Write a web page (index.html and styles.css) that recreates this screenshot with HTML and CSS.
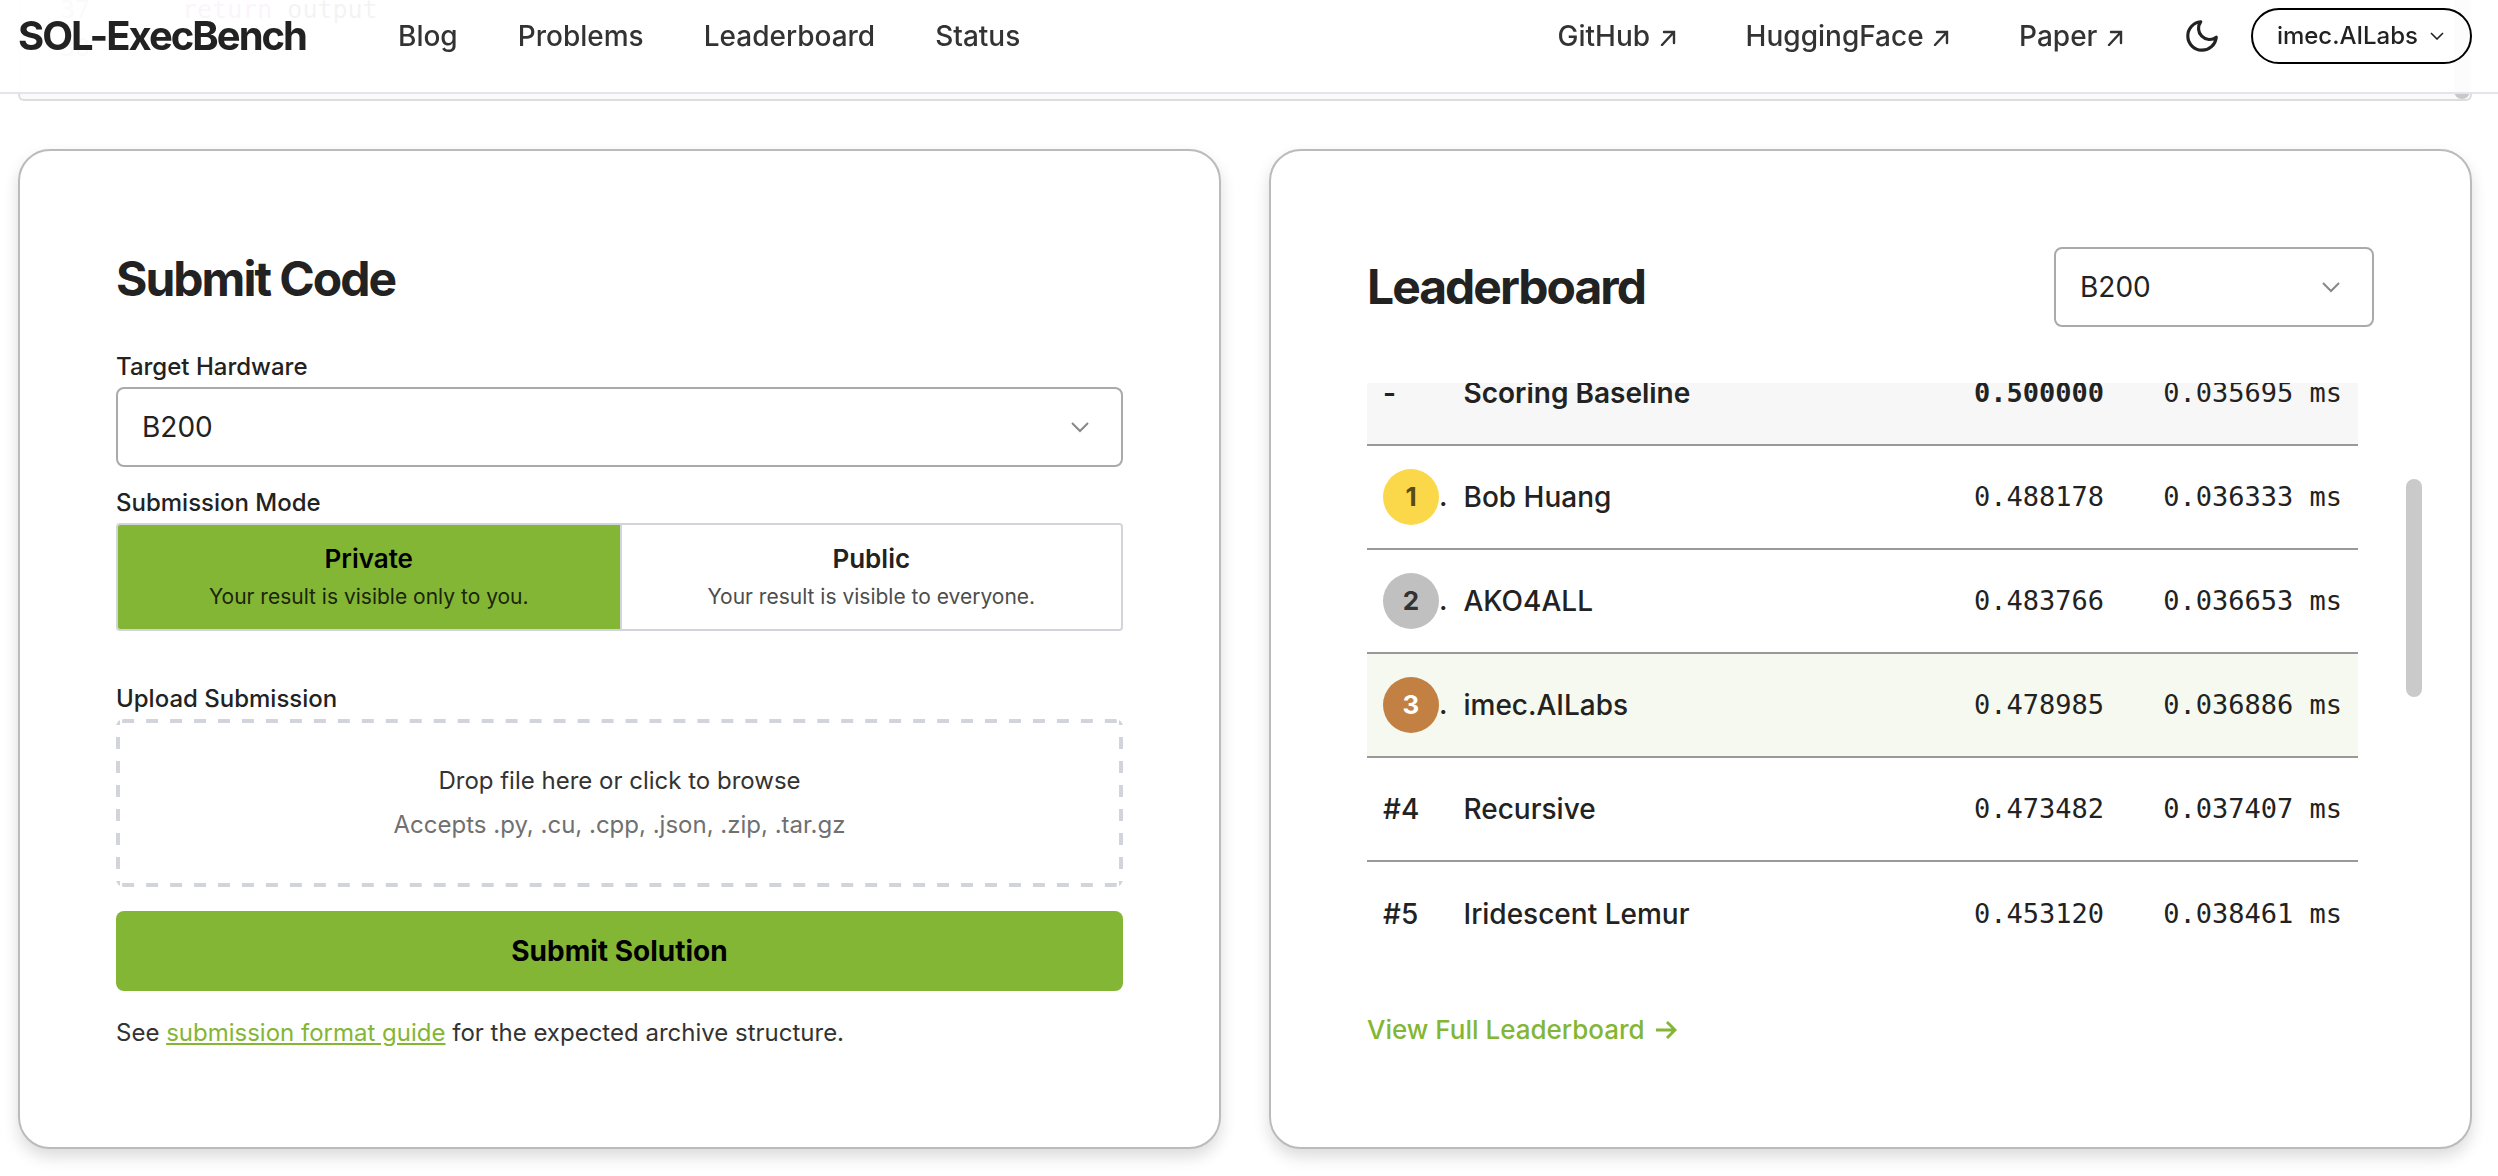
FILE: index.html
```html
<!DOCTYPE html>
<html lang="en">
<head>
    <meta charset="UTF-8">
    <meta name="viewport" content="width=device-width, initial-scale=1.0">
    <title>SOL-ExecBench</title>
    <link rel="stylesheet" href="styles.css">
</head>
<body>
    <header class="header">
        <a href="#" class="logo">SOL-ExecBench</a>
        <nav class="nav">
            <a href="#">Blog</a>
            <a href="#">Problems</a>
            <a href="#">Leaderboard</a>
            <a href="#">Status</a>
        </nav>
        <nav class="nav nav-external">
            <a href="#">GitHub <svg class="icon-out" viewBox="0 0 16 16"><path d="M2 15L14 2M4 2h10v11"/></svg></a>
            <a href="#">HuggingFace <svg class="icon-out" viewBox="0 0 16 16"><path d="M2 15L14 2M4 2h10v11"/></svg></a>
            <a href="#">Paper <svg class="icon-out" viewBox="0 0 16 16"><path d="M2 15L14 2M4 2h10v11"/></svg></a>
        </nav>
        <button type="button" class="theme-button" aria-label="Toggle theme">
            <svg viewBox="0 0 24 24"><path d="M21 12.8A9 9 0 1 1 11.2 3a7 7 0 0 0 9.8 9.8z"/></svg>
        </button>
        <button type="button" class="user-button">
            imec.AILabs
            <svg viewBox="0 0 14 8"><path d="M1 1l6 6 6-6"/></svg>
        </button>
    </header>

    <main class="page">
        <!-- End of the reference code block, scrolled under the header -->
        <div class="code-block">
            <div class="code-lines">
                <div class="code-line"><span class="line-number">37</span><span><span class="keyword">return</span> output</span></div>
                <div class="code-line"><span class="line-number">38</span></div>
            </div>
            <div class="code-scroll"></div>
        </div>

        <div class="cards">
            <section class="card">
                <h2>Submit Code</h2>
                <form class="submit-form">
                    <label for="hardware">Target Hardware</label>
                    <select id="hardware" class="select">
                        <option>B200</option>
                    </select>

                    <fieldset class="mode">
                        <legend>Submission Mode</legend>
                        <div class="mode-options">
                            <label class="mode-option">
                                <input type="radio" name="mode" value="private" checked>
                                <strong>Private</strong>
                                <span>Your result is visible only to you.</span>
                            </label>
                            <label class="mode-option">
                                <input type="radio" name="mode" value="public">
                                <strong>Public</strong>
                                <span>Your result is visible to everyone.</span>
                            </label>
                        </div>
                    </fieldset>

                    <label for="file">Upload Submission</label>
                    <label class="dropzone">
                        <input type="file" id="file">
                        <span class="drop-title">Drop file here or click to browse</span>
                        <span class="drop-hint">Accepts .py, .cu, .cpp, .json, .zip, .tar.gz</span>
                    </label>

                    <button type="submit" class="submit-button">Submit Solution</button>
                </form>
                <p class="note">See <a href="#">submission format guide</a> for the expected archive structure.</p>
            </section>

            <section class="card">
                <div class="board-header">
                    <h2>Leaderboard</h2>
                    <select class="select board-select" aria-label="Hardware">
                        <option>B200</option>
                    </select>
                </div>
                <div class="board-body">
                    <div class="board-clip">
                        <table class="board">
                            <tbody>
                                <tr class="baseline">
                                    <td>-</td>
                                    <td>Scoring Baseline</td>
                                    <td class="num">0.500000</td>
                                    <td class="num time">0.035695 ms</td>
                                </tr>
                                <tr>
                                    <td><span class="medal gold">1</span>.</td>
                                    <td>Bob Huang</td>
                                    <td class="num">0.488178</td>
                                    <td class="num time">0.036333 ms</td>
                                </tr>
                                <tr>
                                    <td><span class="medal silver">2</span>.</td>
                                    <td>AKO4ALL</td>
                                    <td class="num">0.483766</td>
                                    <td class="num time">0.036653 ms</td>
                                </tr>
                                <tr class="mine">
                                    <td><span class="medal bronze">3</span>.</td>
                                    <td>imec.AILabs</td>
                                    <td class="num">0.478985</td>
                                    <td class="num time">0.036886 ms</td>
                                </tr>
                                <tr>
                                    <td>#4</td>
                                    <td>Recursive</td>
                                    <td class="num">0.473482</td>
                                    <td class="num time">0.037407 ms</td>
                                </tr>
                                <tr>
                                    <td>#5</td>
                                    <td>Iridescent Lemur</td>
                                    <td class="num">0.453120</td>
                                    <td class="num time">0.038461 ms</td>
                                </tr>
                            </tbody>
                        </table>
                    </div>
                    <div class="scroll-thumb"></div>
                </div>
                <a href="#" class="board-link">View Full Leaderboard
                    <svg viewBox="0 0 22 20"><path d="M1 10h19M12 2l8 8-8 8"/></svg>
                </a>
            </section>
        </div>
    </main>
</body>
</html>
```
FILE: styles.css
```css
* {
    box-sizing: border-box;
}
body {
    margin: 0;
    background-color: #fff;
    color: #222;
    font-family: Inter, "Liberation Sans", sans-serif;
    font-size: 28px;
    line-height: 40px;
}
svg {
    fill: none;
    stroke: currentColor;
}
button, select, input {
    font: inherit;
    color: inherit;
}
a {
    color: inherit;
    text-decoration: none;
}

/* Header */
.header {
    position: fixed;
    top: 0;
    left: 0;
    right: 0;
    z-index: 10;
    display: flex;
    align-items: center;
    height: 94px;
    padding: 0 26px 20px 18px;
    background-color: rgba(255, 255, 255, 0.95);
    border-bottom: 2px solid #e2e6ea;
}
.logo {
    margin-right: 92px;
    font-size: 40px;
    font-weight: 700;
    letter-spacing: -2px;
}
.nav {
    display: flex;
    gap: 60px;
    font-weight: 500;
    color: #333;
}
.nav-external {
    gap: 70px;
    margin-left: auto;
}
.icon-out {
    width: 16px;
    height: 16px;
    margin-left: 2px;
    stroke-width: 2.4;
    stroke-linecap: round;
}
.theme-button {
    display: flex;
    margin: 0 30px 0 60px;
    padding: 0;
    border: none;
    background: none;
    cursor: pointer;
}
.theme-button svg {
    width: 38px;
    height: 38px;
    stroke-width: 2;
    stroke-linejoin: round;
}
.user-button {
    display: flex;
    align-items: center;
    gap: 12px;
    height: 56px;
    padding: 0 26px 0 24px;
    border: 2px solid #000;
    border-radius: 28px;
    background-color: transparent;
    font-size: 24px;
    font-weight: 500;
    cursor: pointer;
}
.user-button svg {
    width: 14px;
    height: 8px;
    stroke-width: 1.6;
}

.page {
    padding: 0 26px 27px 18px;
}

/* Code block */
.code-block {
    display: flex;
    justify-content: space-between;
    height: 101px;
    border: 2px solid #ddd;
    border-top: none;
    border-radius: 0 0 6px 6px;
    background-color: #fafafa;
    font-family: "DejaVu Sans Mono", "Liberation Mono", monospace;
    font-size: 25px;
    overflow: hidden;
}
.code-line {
    display: flex;
    height: 38px;
    line-height: 20px;
}
.line-number {
    width: 162px;
    padding-left: 40px;
    color: #999;
}
.keyword {
    color: #a626a4;
}
.code-scroll {
    width: 16px;
    border-radius: 0 0 8px 8px;
    background-color: #c8c8c8;
}

/* Cards */
.cards {
    display: grid;
    grid-template-columns: 1fr 1fr;
    gap: 48px;
    margin-top: 48px;
}
.card {
    padding: 96px;
    border: 2px solid #bbb;
    border-radius: 32px;
    background-color: #fff;
    box-shadow: 0 8px 16px rgba(0, 0, 0, 0.14);
}
h2 {
    margin: 0;
    font-size: 48px;
    font-weight: 700;
    line-height: 64px;
    letter-spacing: -2px;
}
.select {
    appearance: none;
    display: block;
    width: 100%;
    height: 80px;
    padding: 0 24px;
    border: 2px solid #aaa;
    border-radius: 8px;
    background: #fff url("data:image/svg+xml,%3Csvg xmlns='http://www.w3.org/2000/svg' viewBox='0 0 18 12' fill='none' stroke='%23888' stroke-width='2'%3E%3Cpath d='M1 2l8 8 8-8'/%3E%3C/svg%3E") no-repeat right 32px center / 18px 12px;
    color: #222;
}

/* Submit form */
.submit-form {
    margin-top: 36px;
    font-size: 24px;
}
.submit-form label,
legend {
    display: block;
    padding: 0;
    font-weight: 500;
}
.submit-form .select {
    font-size: 28px;
}
.mode {
    margin: 16px 0 48px;
    padding: 0;
    border: none;
}
.mode-options {
    display: grid;
    grid-template-columns: 1fr 1fr;
    height: 108px;
    border: 2px solid #d1d5db;
    border-radius: 4px;
    overflow: hidden;
}
.submit-form .mode-option {
    display: flex;
    flex-direction: column;
    justify-content: center;
    text-align: center;
    cursor: pointer;
}
.mode-option + .mode-option {
    border-left: 2px solid #d1d5db;
}
.mode-option input,
.dropzone input {
    position: absolute;
    opacity: 0;
    pointer-events: none;
}
.mode-option strong {
    font-size: 26px;
    font-weight: 600;
}
.mode-option span {
    font-size: 21px;
    font-weight: 400;
    line-height: 36px;
    color: #4d4d4d;
}
.mode-option:has(input:checked) {
    background-color: #84b635;
    color: #000;
}
.mode-option:has(input:checked) span {
    color: #1a250b;
}
/* Long dashes on the four sides, wider than a dashed border draws */
.submit-form .dropzone {
    --dash: #d1d5db 0 25%, transparent 25% 75%, #d1d5db 75%;
    display: flex;
    flex-direction: column;
    align-items: center;
    justify-content: center;
    gap: 4px;
    height: 168px;
    margin-bottom: 24px;
    border-radius: 8px;
    background:
        linear-gradient(90deg, var(--dash)) top / 24px 4px round no-repeat,
        linear-gradient(90deg, var(--dash)) bottom / 24px 4px round no-repeat,
        linear-gradient(var(--dash)) left / 4px 24px no-repeat round,
        linear-gradient(var(--dash)) right / 4px 24px no-repeat round;
    font-weight: 400;
    cursor: pointer;
}
.drop-title {
    color: #333;
}
.drop-hint {
    color: #707070;
}
.submit-button {
    width: 100%;
    height: 80px;
    border: none;
    border-radius: 8px;
    background-color: #84b635;
    color: #000;
    font-size: 28px;
    font-weight: 700;
    cursor: pointer;
}
.note {
    margin: 24px 0 0;
    font-size: 24px;
    line-height: 36px;
    color: #333;
}
.note a {
    color: #84b635;
    text-decoration: underline;
}

/* Leaderboard */
.board-header {
    display: flex;
    align-items: center;
    justify-content: space-between;
}
.board-select {
    width: 320px;
}
.board-body {
    display: flex;
    align-items: flex-start;
    gap: 48px;
    height: 582px;
    margin: 56px -48px 44px 0;
}
.board-clip {
    display: flex;
    flex-direction: column;
    justify-content: flex-end;
    flex: 1;
    height: 582px;
    overflow: hidden;
}
.board {
    width: 100%;
    border-collapse: collapse;
    font-weight: 500;
}
.board tr {
    height: 104px;
    border-bottom: 2px solid #999;
}
.board tr:last-child {
    border-bottom: none;
}
.board td {
    padding: 0 16px;
    white-space: nowrap;
}
.board td:first-child {
    width: 78px;
    padding-right: 0;
}
.board .num {
    width: 190px;
    font-family: "DejaVu Sans Mono", "Liberation Mono", monospace;
    font-size: 27px;
    font-weight: 400;
    text-align: right;
}
.board .time {
    width: 238px;
}
.board .baseline {
    background-color: #f7f7f7;
    font-weight: 600;
}
.baseline .num:not(.time) {
    font-weight: 700;
}
.board .mine {
    background-color: #f5f9ef;
}
.medal {
    display: inline-block;
    width: 56px;
    border-radius: 50%;
    font-size: 26px;
    font-weight: 700;
    line-height: 56px;
    text-align: center;
}
.gold {
    background-color: #fad84a;
    color: #574b19;
}
.silver {
    background-color: #c0c0c0;
    color: #333;
}
.bronze {
    background-color: #c28142;
    color: #fff;
}
.scroll-thumb {
    width: 16px;
    height: 218px;
    margin-top: 96px;
    border-radius: 8px;
    background-color: #cacaca;
}
.board-link {
    display: inline-flex;
    align-items: center;
    gap: 10px;
    color: #84b635;
    font-size: 26px;
    font-weight: 500;
}
.board-link svg {
    width: 22px;
    height: 20px;
    stroke-width: 3;
}
```
